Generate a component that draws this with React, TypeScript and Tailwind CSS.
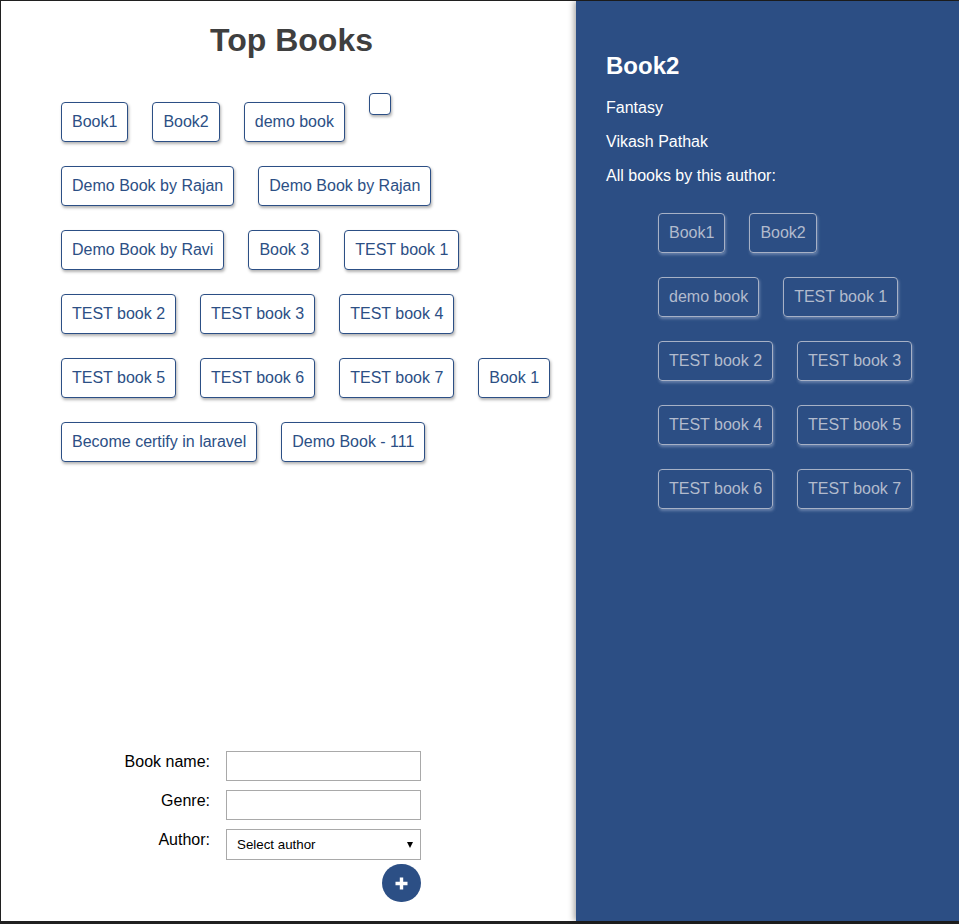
import React from "react";

const topBooks = [
  "Book1",
  "Book2",
  "demo book",
  "",
  "Demo Book by Rajan",
  "Demo Book by Rajan",
  "Demo Book by Ravi",
  "Book 3",
  "TEST book 1",
  "TEST book 2",
  "TEST book 3",
  "TEST book 4",
  "TEST book 5",
  "TEST book 6",
  "TEST book 7",
  "Book 1",
  "Become certify in laravel",
  "Demo Book - 111",
];

const authorBooks = [
  "Book1",
  "Book2",
  "demo book",
  "TEST book 1",
  "TEST book 2",
  "TEST book 3",
  "TEST book 4",
  "TEST book 5",
  "TEST book 6",
  "TEST book 7",
];

export default function App() {
  return (
    <div className="flex h-[924px] w-[959px] bg-[#202020] pl-px pt-px pb-[3px] font-['Liberation_Sans',Arial,sans-serif] text-[16px] leading-[18px]">
      <div className="flex w-[575px] flex-col bg-white">
        <h1 className="mt-[21px] mb-[22px] pl-[6px] text-center text-[32px] font-bold leading-[37px] text-[#3f3f3f]">
          Top Books
        </h1>
        <div className="pl-[48px] leading-[18px]">
          {topBooks.map((b, i) => (
            <span
              key={i}
              className="m-3 inline-block rounded-[4px] border border-[#2c4f85] bg-white p-[10px] align-baseline text-[16px] leading-[18px] text-[#2c4f85] shadow-[1px_2px_3px_rgba(0,0,0,0.3)]"
            >
              {b}
            </span>
          ))}
        </div>
        <div className="mt-auto mb-[19px] ml-[123px] flex w-[297px] flex-col">
          <div className="grid grid-cols-[86px_195px] gap-x-[16px] gap-y-[9px]">
            <div className="pt-[2px] text-right text-black">Book name:</div>
            <div className="h-[30px] border border-[#a9a9a9] bg-white" />
            <div className="pt-[2px] text-right text-black">Genre:</div>
            <div className="h-[30px] border border-[#a9a9a9] bg-white" />
            <div className="pt-[2px] text-right text-black">Author:</div>
            <div className="flex h-[31px] items-center justify-between border border-[#a9a9a9] bg-white pr-[7px] pl-[10px] text-[13.33px] text-black">
              <span>Select author</span>
              <svg width="6" height="6" viewBox="0 0 6 6">
                <polygon points="0,0 6,0 3,6" fill="#000" />
              </svg>
            </div>
          </div>
          <div className="mt-[4px] flex justify-end">
            <div className="flex h-[38px] w-[39px] items-center justify-center rounded-full bg-[#2c4f85]">
              <svg width="15" height="15" viewBox="0 0 15 15">
                <path d="M7.5 1.5v12M1.5 7.5h12" stroke="#fff" strokeWidth="3.4" />
              </svg>
            </div>
          </div>
        </div>
      </div>
      <div className="relative z-10 w-[383px] bg-[#2c4e84] pt-[30px] pr-[20px] pl-[30px] text-white shadow-[-2px_0_6px_rgba(0,0,0,0.35)]">
        <h2 className="mt-[21px] mb-[19px] text-[24px] font-bold leading-[28px]">Book2</h2>
        <p className="mb-[16px] leading-[18px]">Fantasy</p>
        <p className="mb-[16px] leading-[18px]">Vikash Pathak</p>
        <p className="leading-[18px]">All books by this author:</p>
        <div className="mt-[16px] pl-[40px]">
          {authorBooks.map((b, i) => (
            <span
              key={i}
              className="m-3 inline-block rounded-[4px] border border-[#a7b1c6] p-[10px] align-baseline text-[16px] leading-[18px] text-[#b2bbcd] shadow-[1px_2px_3px_rgba(210,220,240,0.35)]"
            >
              {b}
            </span>
          ))}
        </div>
      </div>
    </div>
  );
}
